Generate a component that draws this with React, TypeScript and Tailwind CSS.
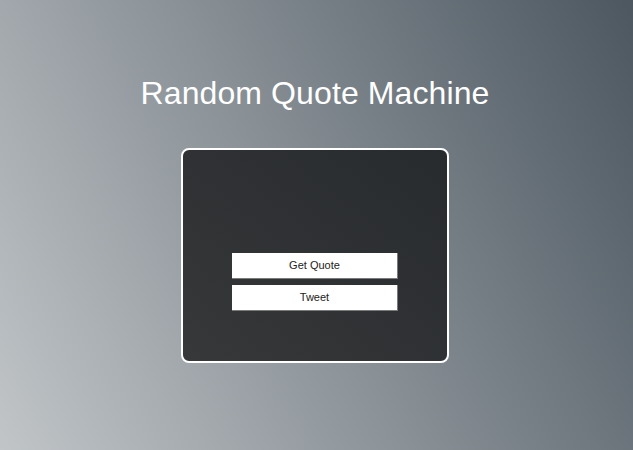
export default function App() {
  return (
    <div className="w-full min-h-[450px] flex flex-col items-center pr-[3px] bg-[linear-gradient(63deg,#c1c5c8,#4c5760)] font-['Liberation_Sans',Arial,sans-serif]">
      <h1 className="pt-[75px] text-[32px] leading-[37px] text-white font-normal tracking-[0.1px]">
        Random Quote Machine
      </h1>

      {/* Quote card */}
      <div className="mt-[36px] w-[268px] h-[215px] border-2 border-white rounded-lg bg-gradient-to-tr from-[#363839] to-[#282b2e] flex flex-col items-center pt-[103px] gap-[6px]">
        <button className="w-[166px] h-[26px] bg-white border-r border-b border-[#7a7a7a] text-[11px] text-[#222]">
          Get Quote
        </button>
        <button className="w-[166px] h-[26px] bg-white border-r border-b border-[#7a7a7a] text-[11px] text-[#222]">
          Tweet
        </button>
      </div>
    </div>
  );
}
